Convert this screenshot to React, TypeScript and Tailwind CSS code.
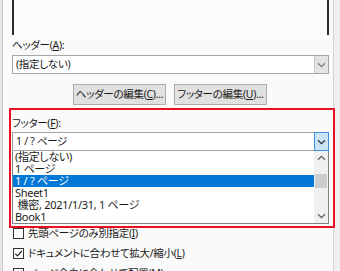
import React from "react";

const font = { fontFamily: '"Noto Sans", "Noto Sans CJK JP", sans-serif' };

function Chevron({ down = true, color = "#444" }: { down?: boolean; color?: string }) {
  return (
    <svg width="9" height="6" viewBox="0 0 9 6">
      <path
        d={down ? "M1 1.2 L4.5 4.6 L8 1.2" : "M1 4.8 L4.5 1.4 L8 4.8"}
        fill="none"
        stroke={color}
        strokeWidth="1.3"
      />
    </svg>
  );
}

function CheckBox({ checked }: { checked: boolean }) {
  return (
    <div className="w-[11px] h-[11px] border border-[#333] bg-white flex items-center justify-center shrink-0">
      {checked && (
        <svg width="9" height="9" viewBox="0 0 9 9">
          <path d="M1.2 4.6 L3.5 6.9 L7.9 1.8" fill="none" stroke="#222" strokeWidth="1.2" />
        </svg>
      )}
    </div>
  );
}

export default function App() {
  const items = [
    "(指定しない)",
    "1 ページ",
    "1 / ? ページ",
    "Sheet1",
    " 機密, 2021/1/31, 1 ページ",
    "Book1",
  ];
  return (
    <div
      className="relative w-[340px] h-[271px] overflow-hidden flex bg-[#fafafa] text-[10.5px] tracking-[-0.3px] text-[#1a1a1a] whitespace-nowrap [font-feature-settings:'palt']"
      style={font}
    >
      <div className="w-[3px] bg-[#e6e6e6] border-r border-[#c9c9c9] shrink-0" />
      <div className="flex-1 flex flex-col pl-[9px] pr-[4px] min-w-0">
        <div className="h-[35px] border-x-2 border-[#2b2b2b] bg-[#fcfcfc] shrink-0" />
        <div className="h-[20px] leading-[20px] shrink-0">
          ヘッダー(<span className="underline">A</span>):
        </div>
        <div className="h-[19px] border border-[#a5a5a5] bg-white flex items-stretch shrink-0">
          <div className="flex-1 pl-[3px] leading-[17px]">(指定しない)</div>
          <div className="w-[14px] bg-[#e3e3e3] border-l border-[#c8c8c8] flex items-center justify-center">
            <Chevron color="#7a7a7a" />
          </div>
        </div>
        <div className="mt-[10px] flex gap-[8px] pl-[61px] shrink-0">
          <div className="w-[93px] h-[21px] border border-[#adadad] bg-[#e1e1e1] flex items-center justify-center leading-none">
            ヘッダーの編集(<span className="underline">C</span>)...
          </div>
          <div className="w-[93px] h-[21px] border border-[#adadad] bg-[#e1e1e1] flex items-center justify-center leading-none">
            フッターの編集(<span className="underline">U</span>)...
          </div>
        </div>
        <div className="h-[18px] mt-[9px] leading-[18px] shrink-0">
          フッター(<span className="underline">F</span>):
        </div>
        <div className="h-[19px] border border-[#a5a5a5] bg-white flex items-stretch shrink-0">
          <div className="flex-1 pl-[3px] leading-[17px]">1 / ? ページ</div>
          <div className="w-[15px] -my-px -mr-px bg-[#cce4f7] border border-[#3d8fd6] flex items-center justify-center">
            <Chevron color="#333" />
          </div>
        </div>
        <div className="h-[73px] border border-t-0 border-[#828282] bg-white flex overflow-hidden shrink-0">
          <div className="flex-1 flex flex-col">
            {items.map((t, i) => (
              <div
                key={i}
                className={
                  "h-[12px] leading-[12px] pl-[2px] whitespace-pre shrink-0 text-[11px] " +
                  (i === 2 ? "bg-[#0078d7] text-white" : "")
                }
              >
                {t}
              </div>
            ))}
          </div>
          <div className="w-[14px] bg-[#f0f0f0] flex flex-col items-center">
            <div className="h-[14px] flex items-center justify-center">
              <Chevron down={false} color="#606060" />
            </div>
            <div className="w-[12px] h-[14px] bg-[#cdcdcd] mt-[9px]" />
            <div className="flex-1" />
            <div className="h-[14px] flex items-center justify-center">
              <Chevron color="#606060" />
            </div>
          </div>
        </div>
        <div className="mt-[3px] flex flex-col gap-[7px] pl-[1px] shrink-0">
          <div className="flex items-center gap-[4px] h-[13px]">
            <CheckBox checked={false} />
            <span className="leading-[13px]">
              先頭ページのみ別指定(<span className="underline">I</span>)
            </span>
          </div>
          <div className="flex items-center gap-[4px] h-[13px]">
            <CheckBox checked={true} />
            <span className="leading-[13px]">
              ドキュメントに合わせて拡大/縮小(<span className="underline">L</span>)
            </span>
          </div>
          <div className="flex items-center gap-[4px] h-[13px]">
            <CheckBox checked={true} />
            <span className="leading-[13px]">
              ページ余白に合わせて配置(<span className="underline">M</span>)
            </span>
          </div>
        </div>
      </div>
      <div className="w-[7px] bg-[#f0f0f0] border-l border-[#d3d3d3] shrink-0" />
      <div className="absolute left-[9px] top-[108px] w-[326px] h-[120px] border-2 border-[#e81123] pointer-events-none" />
    </div>
  );
}
